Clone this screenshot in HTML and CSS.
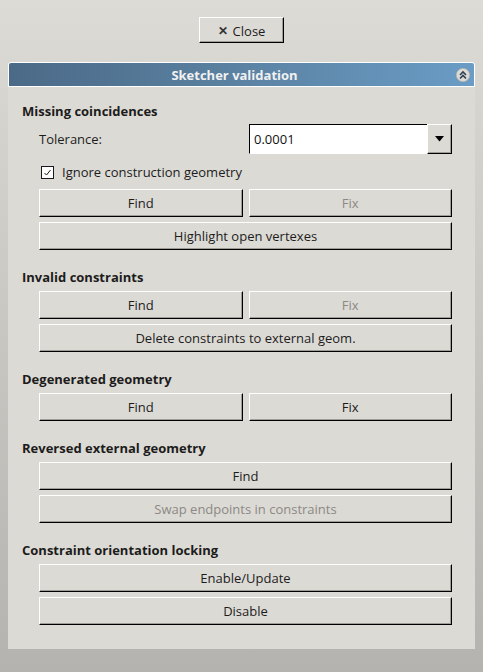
FILE: index.html
```html
<!DOCTYPE html>
<html>
<head>
<meta charset="utf-8">
<link rel="stylesheet" href="styles.css">
</head>
<body>
<div class="top">
  <button class="btn close-btn"><span class="x">✕</span> Close</button>
</div>
<div class="panel">
  <div class="panel-header">
    <span class="panel-title">Sketcher validation</span>
    <span class="collapse">
      <svg width="14" height="14" viewBox="0 0 14 14">
        <circle cx="7" cy="7" r="6.6" fill="#dcdad5" stroke="#b9b7b2" stroke-width="0.8"/>
        <path d="M4 7 L7 4 L10 7 M4 10.5 L7 7.5 L10 10.5" fill="none" stroke="#2c3f55" stroke-width="1.6"/>
      </svg>
    </span>
  </div>
  <div class="panel-body">
    <div class="section">
      <div class="section-title">Missing coincidences</div>
      <div class="content">
        <div class="row tol-row">
          <span class="label">Tolerance:</span>
          <div class="combo">
            <div class="combo-input">0.0001</div>
            <div class="combo-btn">
              <svg width="9" height="6" viewBox="0 0 9 6"><path d="M0 0 H9 L4.5 5.5 Z" fill="#000"/></svg>
            </div>
          </div>
        </div>
        <div class="row check-row">
          <span class="checkbox">
            <svg width="13" height="13" viewBox="0 0 13 13">
              <rect x="0.5" y="0.5" width="12" height="12" fill="#fff" stroke="#1a1a1a"/>
              <path d="M3.5 7 L5.5 9 L9.5 4" fill="none" stroke="#1a1a1a" stroke-width="1"/>
            </svg>
          </span>
          <span class="label">Ignore construction geometry</span>
        </div>
        <div class="pair">
          <button class="btn">Find</button>
          <button class="btn disabled">Fix</button>
        </div>
        <button class="btn wide">Highlight open vertexes</button>
      </div>
    </div>
    <div class="section">
      <div class="section-title">Invalid constraints</div>
      <div class="content">
        <div class="pair">
          <button class="btn">Find</button>
          <button class="btn disabled">Fix</button>
        </div>
        <button class="btn wide">Delete constraints to external geom.</button>
      </div>
    </div>
    <div class="section">
      <div class="section-title">Degenerated geometry</div>
      <div class="content">
        <div class="pair">
          <button class="btn">Find</button>
          <button class="btn">Fix</button>
        </div>
      </div>
    </div>
    <div class="section">
      <div class="section-title">Reversed external geometry</div>
      <div class="content">
        <button class="btn wide">Find</button>
        <button class="btn wide disabled">Swap endpoints in constraints</button>
      </div>
    </div>
    <div class="section">
      <div class="section-title">Constraint orientation locking</div>
      <div class="content">
        <button class="btn wide">Enable/Update</button>
        <button class="btn wide">Disable</button>
      </div>
    </div>
  </div>
</div>
</body>
</html>
```
FILE: styles.css
```css
html, body {
  margin: 0;
  padding: 0;
}
body {
  width: 483px;
  height: 672px;
  overflow: hidden;
  background: linear-gradient(to bottom, #dddbd6 0%, #d3d2cd 20%, #b4b3af 100%);
  font-family: "Open Sans", "Noto Sans", sans-serif;
  font-size: 13px;
  color: #1c1c1c;
}
.top {
  display: flex;
  justify-content: center;
  padding-top: 17px;
}
.btn {
  font-family: "Open Sans", "Noto Sans", sans-serif;
  font-size: 13px;
  color: #1c1c1c;
  background: #dcdad5;
  border-top: 1px solid #ffffff;
  border-left: 1px solid #ffffff;
  border-right: 1px solid #000000;
  border-bottom: 1px solid #000000;
  box-shadow: inset -1px -1px 0 #a09d97;
  height: 28px;
  padding: 0;
  margin: 0;
  box-sizing: border-box;
  display: flex;
  align-items: center;
  justify-content: center;
}
.btn.disabled {
  color: #8b8984;
}
.close-btn {
  width: 85px;
  height: 26px;
  gap: 5px;
  padding-top: 1px;
}
.close-btn .x {
  font-size: 12px;
  font-weight: bold;
  color: #333;
}
.panel {
  margin: 19px 8px 0 8px;
  width: 467px;
}
.panel-header {
  height: 25px;
  box-sizing: border-box;
  border: 1px solid #ffffff;
  border-radius: 3px 3px 0 0;
  background: linear-gradient(to right, #4b6a88 0%, #587d9c 40%, #6a9cc5 100%);
  display: flex;
  align-items: center;
  padding-right: 4px;
}
.panel-title {
  flex: 1;
  text-align: center;
  color: #f1f1f1;
  font-weight: bold;
  font-size: 13px;
  padding-left: 4px;
}
.collapse {
  width: 14px;
  height: 14px;
  display: flex;
}
.panel-body {
  background: #dcdad5;
  padding: 15px 23px 24px 14px;
  display: flex;
  flex-direction: column;
  gap: 18px;
}
.section {
  display: flex;
  flex-direction: column;
  gap: 5px;
}
.section-title {
  font-weight: bold;
  height: 18px;
  line-height: 18px;
}
.content {
  padding-left: 17px;
  display: flex;
  flex-direction: column;
  gap: 5px;
}
.row {
  display: flex;
  align-items: center;
}
.tol-row {
  height: 30px;
  margin-top: -1px;
  justify-content: space-between;
}
.combo {
  width: 203px;
  height: 30px;
  display: flex;
}
.combo-input {
  flex: 1;
  background: #ffffff;
  border-top: 1px solid #000;
  border-left: 1px solid #000;
  border-bottom: 1px solid #fff;
  box-sizing: border-box;
  display: flex;
  align-items: center;
  padding-left: 4px;
  color: #111;
}
.combo-btn {
  width: 25px;
  background: #dcdad5;
  border-top: 1px solid #fff;
  border-left: 1px solid #fff;
  border-right: 1px solid #000;
  border-bottom: 1px solid #000;
  box-shadow: inset -1px -1px 0 #a09d97;
  box-sizing: border-box;
  display: flex;
  align-items: center;
  justify-content: center;
}
.check-row {
  height: 20px;
  margin-top: 3px;
  margin-bottom: 2px;
  gap: 8px;
  padding-left: 2px;
}
.checkbox {
  display: flex;
}
.pair {
  display: flex;
  gap: 6px;
}
.pair .btn {
  flex: 1;
}
.wide {
  width: 100%;
}
```
